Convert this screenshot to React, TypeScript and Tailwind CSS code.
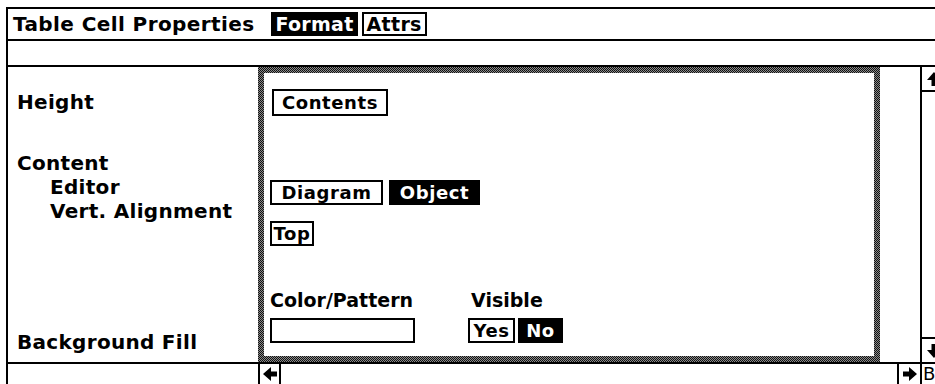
import React from 'react';

const font = { fontFamily: '"DejaVu Sans", "Liberation Sans", sans-serif' };

const dither =
  'bg-[repeating-conic-gradient(#111_0%_25%,#8a8a8a_0%_50%)] bg-[length:2px_2px]';

const Btn = ({ label, on = false, className = '' }: { label: string; on?: boolean; className?: string }) => (
  <div
    className={`h-[25px] border-2 flex items-center justify-center text-[18px] font-bold leading-none tracking-[0.6px] ${
      on ? 'bg-black border-black text-white' : 'bg-white border-black text-black'
    } ${className}`}
  >
    {label}
  </div>
);

const Arrow = ({ dir }: { dir: 'up' | 'down' | 'left' | 'right' }) => {
  const rot = { up: 0, right: 90, down: 180, left: 270 }[dir];
  return (
    <svg width="16" height="16" viewBox="0 0 16 16" className="shrink-0" style={{ transform: `rotate(${rot}deg)` }}>
      <path d="M8 1 L15 9 H10.5 V15 H5.5 V9 H1 Z" fill="black" />
    </svg>
  );
};

export default function App() {
  return (
    <div className="w-[935px] h-[384px] bg-white pt-[7px] pl-[6px] overflow-hidden text-black" style={font}>
      <div className="h-full border-l-2 border-t-2 border-black flex flex-col">
        {/* Title bar */}
        <div className="h-[32px] border-b-2 border-black flex items-center pl-[5px] shrink-0">
          <span className="text-[20px] font-bold tracking-[0.4px]">Table Cell Properties</span>
          <div className="ml-[17px] h-[24px] bg-black text-white text-[19px] font-bold px-[4px] flex items-center tracking-[0.3px]">Format</div>
          <div className="ml-[4px] h-[24px] border-2 border-black text-[19px] font-bold px-[3px] flex items-center tracking-[0.3px]">Attrs</div>
        </div>

        {/* Empty row */}
        <div className="h-[26px] border-b-2 border-black shrink-0" />

        {/* Main */}
        <div className="flex flex-1 min-h-0">
          {/* Labels */}
          <div className="w-[250px] shrink-0 flex flex-col text-[20px] font-bold leading-[24px] tracking-[0.3px] pl-[9px]">
            <div className="mt-[23px]">Height</div>
            <div className="mt-[37px]">Content</div>
            <div className="pl-[33px]">Editor</div>
            <div className="pl-[33px]">Vert. Alignment</div>
            <div className="mt-[107px]">Background Fill</div>
          </div>

          {/* Frame */}
          <div className={`w-[622px] shrink-0 p-[6px] ${dither}`}>
            <div className="h-full bg-white flex flex-col pl-[6px]">
              <Btn label="Contents" className="mt-[16px] ml-[2px] w-[116px] h-[27px]" />
              <div className="flex mt-[64px] gap-[6px]">
                <Btn label="Diagram" className="w-[113px]" />
                <Btn label="Object" on className="w-[91px]" />
              </div>
              <div className="flex mt-[16px]">
                <Btn label="Top" className="w-[44px]" />
              </div>
              <div className="flex mt-[42px] text-[19px] font-bold leading-[24px]">
                <span>Color/Pattern</span>
                <span className="ml-[58px]">Visible</span>
              </div>
              <div className="flex mt-[6px] items-center">
                <div className="w-[145px] h-[25px] border-2 border-black" />
                <Btn label="Yes" className="ml-[53px] w-[47px]" />
                <Btn label="No" on className="ml-[3px] w-[45px]" />
              </div>
            </div>
          </div>

          {/* White strip */}
          <div className="w-[40px] shrink-0" />

          {/* Vertical scrollbar */}
          <div className="flex-1 border-l-2 border-black flex flex-col overflow-hidden">
            <div className="h-[25px] border-b-2 border-black flex items-center pl-[4px]">
              <Arrow dir="up" />
            </div>
            <div className="flex-1" />
            <div className="h-[25px] border-t-2 border-black flex items-center pl-[4px]">
              <Arrow dir="down" />
            </div>
          </div>
        </div>

        {/* Bottom row */}
        <div className="h-[22px] border-t-2 border-black flex shrink-0">
          <div className="w-[250px] shrink-0" />
          <div className="w-[23px] border-l-2 border-r-2 border-black flex items-center justify-center">
            <Arrow dir="left" />
          </div>
          <div className="flex-1" />
          <div className="w-[23px] border-l-2 border-black flex items-center justify-center">
            <Arrow dir="right" />
          </div>
          <div className="w-[15px] border-l-2 border-black overflow-hidden pl-[1px] text-[18px] leading-[20px]">B</div>
        </div>
      </div>
    </div>
  );
}
